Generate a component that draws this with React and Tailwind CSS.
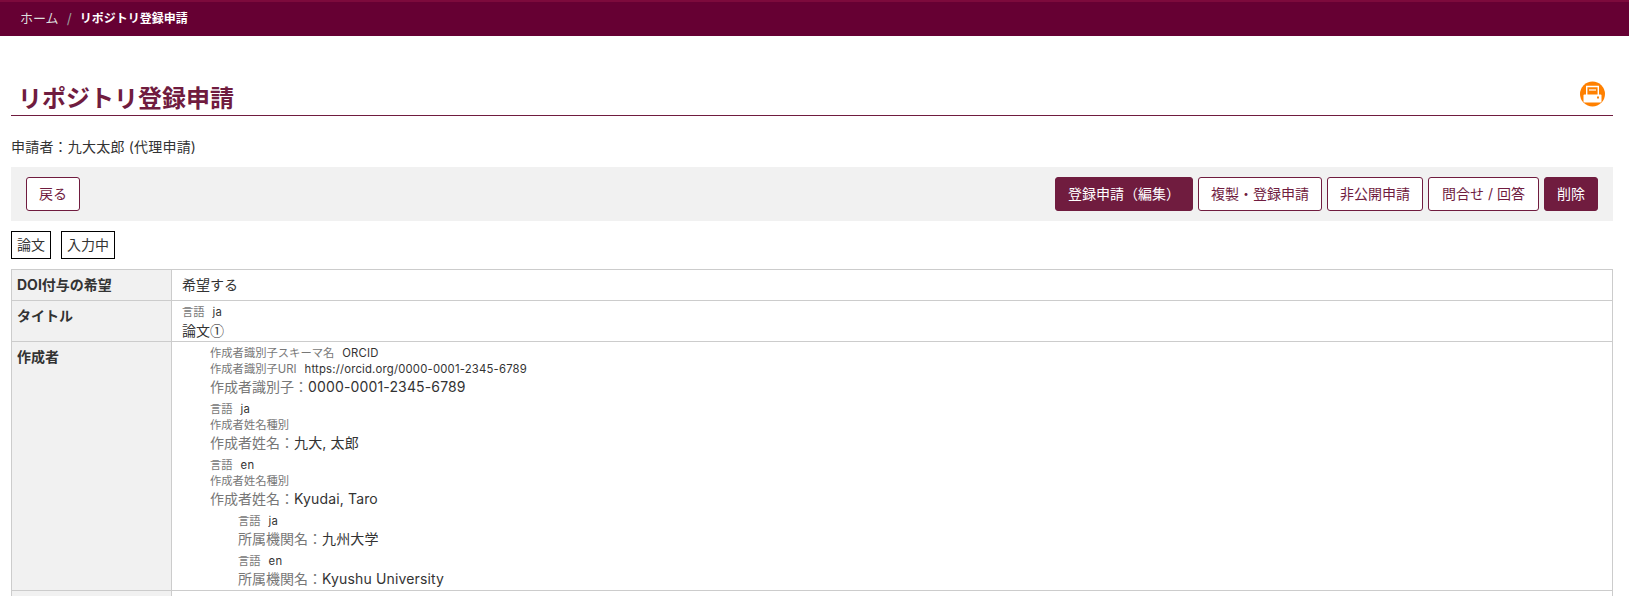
import React from 'react';

const FONT = "font-['Inter','Noto_Sans_CJK_JP',sans-serif]";

const PrintIcon = () => (
  <svg width="25" height="26" viewBox="0 0 25 26" className="mt-px shrink-0">
    <circle cx="12.5" cy="13" r="12.5" fill="#ff8000" />
    <path d="M6.7 14V5.5h11.6V14" fill="none" stroke="#fff" strokeWidth="1.4" />
    <path d="M9 9h7" stroke="#fff" strokeWidth="1.2" />
    <rect x="3.5" y="13.5" width="18" height="8" rx="1" fill="#fff" />
    <rect x="17" y="15.5" width="2" height="2" fill="#ff8000" />
  </svg>
);

const Btn = ({ children, solid, className = '' }) => (
  <button
    className={`h-[34px] rounded-[3px] border border-[#701c3f] text-sm ${
      solid ? 'bg-[#701c3f] text-white' : 'bg-white text-[#701c3f]'
    } ${className}`}
  >
    {children}
  </button>
);

const Meta = ({ label, value }) => (
  <div className="h-4 text-[11.3px] leading-4">
    <span className="text-[#777]">{label}</span>
    {value && <span className="ml-2 tracking-[0.2px] text-[#333]">{value}</span>}
  </div>
);

const Field = ({ label, value }) => (
  <div className="h-5 text-sm leading-5">
    <span className="text-[#777]">{label}：</span>
    <span className="tracking-[0.15px] text-[#333]">{value}</span>
  </div>
);

const Row = ({ title, children }) => (
  <tr>
    <th className="w-[160px] border border-[#ccc] bg-[#f1f1f1] px-[5px] py-1.5 text-left align-top text-sm leading-[18px] font-bold text-[#333]">
      {title}
    </th>
    <td className="border border-[#ccc] px-2.5 align-top text-[#333]">{children}</td>
  </tr>
);

export default function App() {
  return (
    <div className={`h-[596px] overflow-hidden bg-white ${FONT}`}>
      {/* Breadcrumb */}
      <nav className="flex h-9 items-center border-t-2 border-[#7d0a3c] bg-[#660033] pl-5 text-xs">
        <span className="text-[13px] text-[#ddd]">ホーム</span>
        <span className="mx-2 text-sm text-[#999]">/</span>
        <span className="font-bold text-white">リポジトリ登録申請</span>
      </nav>

      <main className="pr-4 pl-[11px]">
        {/* Title */}
        <div className="mt-[44px] flex h-9 items-start justify-between border-b border-[#701c3f] pr-[8px] pl-[7px]">
          <h1 className="text-2xl leading-[38px] font-bold text-[#701c3f]">リポジトリ登録申請</h1>
          <PrintIcon />
        </div>

        <p className="mt-[21px] text-sm leading-5 tracking-[0.2px] text-[#333]">申請者：九大太郎 (代理申請)</p>

        {/* Actions */}
        <div className="mt-[10px] flex h-[54px] items-center justify-between bg-[#f1f1f1] px-[15px]">
          <Btn className="w-[54px]">戻る</Btn>
          <div className="flex gap-[5px]">
            <Btn solid className="w-[138px]">登録申請（編集）</Btn>
            <Btn className="w-[124px]">複製・登録申請</Btn>
            <Btn className="w-[96px]">非公開申請</Btn>
            <Btn className="w-[111px]">問合せ / 回答</Btn>
            <Btn solid className="w-[54px]">削除</Btn>
          </div>
        </div>

        {/* Tags */}
        <div className="mt-[10px] flex gap-[10px]">
          <span className="flex h-7 w-10 items-center justify-center border border-black text-sm text-[#333]">論文</span>
          <span className="flex h-7 w-[54px] items-center justify-center border border-black text-sm text-[#333]">入力中</span>
        </div>

        {/* Detail table */}
        <table className="mt-[10px] w-full border-collapse">
          <tbody>
            <Row title="DOI付与の希望">
              <div className="text-sm leading-[30px]">希望する</div>
            </Row>
            <Row title="タイトル">
              <div className="pt-[3px] pb-px">
                <Meta label="言語" value="ja" />
                <div className="h-5 font-['Noto_Sans_CJK_JP',sans-serif] text-sm leading-5">論文①</div>
              </div>
            </Row>
            <Row title="作成者">
              <div className="pt-[3px] pb-px pl-[28px]">
                <Meta label="作成者識別子スキーマ名" value="ORCID" />
                <Meta label="作成者識別子URI" value="https://orcid.org/0000-0001-2345-6789" />
                <Field label="作成者識別子" value="0000-0001-2345-6789" />
                <div className="mt-1">
                  <Meta label="言語" value="ja" />
                  <Meta label="作成者姓名種別" />
                  <Field label="作成者姓名" value="九大, 太郎" />
                </div>
                <div className="mt-1">
                  <Meta label="言語" value="en" />
                  <Meta label="作成者姓名種別" />
                  <Field label="作成者姓名" value="Kyudai, Taro" />
                </div>
                <div className="mt-1 pl-[28px]">
                  <Meta label="言語" value="ja" />
                  <Field label="所属機関名" value="九州大学" />
                  <div className="mt-1">
                    <Meta label="言語" value="en" />
                    <Field label="所属機関名" value="Kyushu University" />
                  </div>
                </div>
              </div>
            </Row>
            <Row title="">
              <div className="h-8" />
            </Row>
          </tbody>
        </table>
      </main>
    </div>
  );
}
